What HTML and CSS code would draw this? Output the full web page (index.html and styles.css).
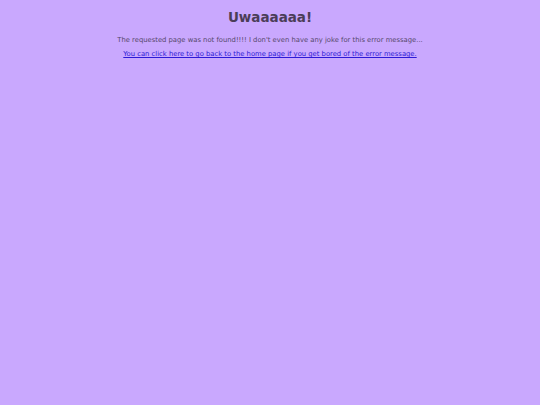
FILE: index.html
```html
<!DOCTYPE html>
<html lang="en">
<head>
<meta charset="utf-8">
<title>Page not found</title>
<link rel="stylesheet" href="styles.css">
</head>
<body>
<main class="notfound">
  <h1 class="notfound-title">Uwaaaaaa!</h1>
  <p class="notfound-text">The requested page was not found!!!! I don't even have any joke for this error message...</p>
  <p class="notfound-link"><a href="/">You can click here to go back to the home page if you get bored of the error message.</a></p>
</main>
</body>
</html>
```

FILE: styles.css
```css
html, body {
  margin: 0;
  padding: 0;
  height: 100%;
}

body {
  background: #c9a8fe;
  color: #4b3d58;
  font-family: "DejaVu Sans", sans-serif;
}

.notfound {
  text-align: center;
  padding-top: 9px;
}

.notfound-title {
  margin: 0;
  font-size: 13.5px;
  font-weight: bold;
  line-height: 16px;
}

.notfound-text {
  margin: 10px 0 0;
  font-size: 6.8px;
  line-height: 10px;
  color: #55476a;
}

.notfound-link {
  margin: 4px 0 0;
  font-size: 6.8px;
  line-height: 10px;
}

.notfound-link a {
  color: #2d1ad6;
}
```
